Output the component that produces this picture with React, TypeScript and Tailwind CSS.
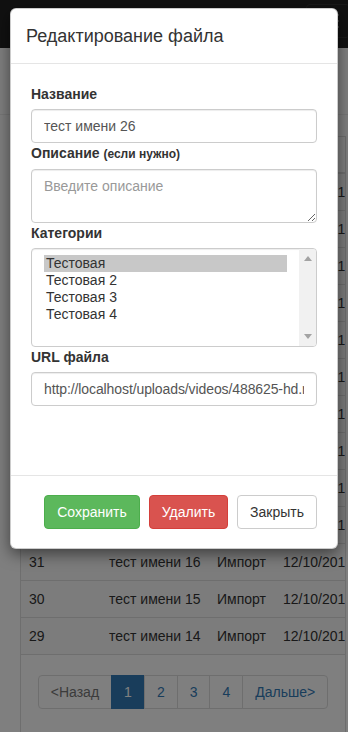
import React from 'react';

const rows = Array.from({ length: 13 }, (_, i) => ({
  id: 41 - i,
  name: `тест имени ${26 - i}`,
  category: 'Импорт',
  date: '12/10/2017',
}));

const options = ['Тестовая', 'Тестовая 2', 'Тестовая 3', 'Тестовая 4'];

const pages = ['1', '2', '3', '4'];

// Page behind the modal
const BackgroundPage = () => (
  <div className="w-[348px]">
    <div className="flex h-[48px] justify-end bg-[#222]">
      <div className="mr-[-2px] mt-[4px] flex h-[34px] w-[44px] flex-col justify-center gap-[4px] rounded-[4px] border border-[#333] px-[10px]">
        <span className="block h-[2px] w-[22px] rounded-[1px] bg-[#888]" />
        <span className="block h-[2px] w-[22px] rounded-[1px] bg-[#888]" />
        <span className="block h-[2px] w-[22px] rounded-[1px] bg-[#888]" />
      </div>
    </div>
    <div className="h-[67px] border-b border-[#eee]" />
    <div className="mt-[21px] ml-[20px] h-[700px] w-[326px] overflow-hidden border-x border-t border-[#ddd]">
      <div className="grid h-[37px] grid-cols-[80px_108px_66px_1fr] items-center border-b-2 border-[#ddd] font-bold">
        <div className="px-2">ID</div>
        <div className="px-2">Название</div>
        <div className="px-2">Тип</div>
        <div className="px-2">Дата</div>
      </div>
      {rows.map((r) => (
        <div
          key={r.id}
          className="grid h-[37px] grid-cols-[80px_108px_66px_1fr] items-center whitespace-nowrap border-b border-[#ddd] bg-[#f9f9f9]"
        >
          <div className="px-2">{r.id}</div>
          <div className="px-2">{r.name}</div>
          <div className="px-2">{r.category}</div>
          <div className="px-2">{r.date}</div>
        </div>
      ))}
      <div className="flex justify-center pt-5">
        <div className="flex h-[34px]">
          <span className="flex items-center rounded-l-[4px] border border-[#ddd] bg-white px-3 text-[#777]">&lt;Назад</span>
          {pages.map((p) => (
            <span
              key={p}
              className={
                p === '1'
                  ? '-ml-px flex items-center border border-[#337ab7] bg-[#337ab7] px-3 text-white'
                  : '-ml-px flex items-center border border-[#ddd] bg-white px-3 text-[#337ab7]'
              }
            >
              {p}
            </span>
          ))}
          <span className="-ml-px flex items-center rounded-r-[4px] border border-[#ddd] bg-white px-3 text-[#337ab7]">Дальше&gt;</span>
        </div>
      </div>
    </div>
  </div>
);

const inputClass =
  "block h-[34px] w-full rounded-[4px] border border-[#ccc] bg-white px-3 font-['Liberation_Sans',Arial,sans-serif] text-[14px] text-[#555] shadow-[inset_0_1px_1px_rgba(0,0,0,0.075)] outline-none";

const EditFileModal = () => (
  <div className="absolute left-[10px] top-[8px] w-[328px] rounded-[6px] border border-black/20 bg-white shadow-[0_5px_15px_rgba(0,0,0,0.5)]">
    <div className="flex h-[55px] items-center border-b border-[#e5e5e5] px-[15px]">
      <h4 className="text-[18px] leading-[26px] text-[#333]">Редактирование файла</h4>
    </div>

    <div className="h-[411px] px-5 pt-5">
      <label className="mb-[5px] block font-bold leading-[20px]">Название</label>
      <input className={inputClass} readOnly defaultValue="тест имени 26" />

      <label className="mb-[5px] block font-bold leading-[20px]">
        Описание <small className="text-[12px]">(если нужно)</small>
      </label>
      <textarea
        className="block h-[54px] w-full rounded-[4px] border border-[#ccc] bg-white px-3 py-[6px] font-['Liberation_Sans',Arial,sans-serif] text-[14px] leading-[20px] text-[#555] shadow-[inset_0_1px_1px_rgba(0,0,0,0.075)] outline-none placeholder:text-[#999]"
        readOnly
        placeholder="Введите описание"
      />

      <label className="mb-[5px] block font-bold leading-[20px]">Категории</label>
      <div className="flex h-[99px] overflow-hidden rounded-[4px] border border-[#ccc] shadow-[inset_0_1px_1px_rgba(0,0,0,0.075)]">
        <div className="flex-1 px-3 pt-[6px] text-[14px] text-[#333]">
          {options.map((o, i) => (
            <div key={o} className={`h-[17px] px-[2px] leading-[17px] ${i === 0 ? 'bg-[#c8c8c8]' : ''}`}>
              {o}
            </div>
          ))}
        </div>
        <div className="flex w-[17px] flex-col items-center justify-between bg-[#f1f1f1] py-[7px]">
          <svg width="8" height="5" viewBox="0 0 8 5">
            <path d="M0 5 L4 0 L8 5 Z" fill="#a3a3a3" />
          </svg>
          <svg width="8" height="5" viewBox="0 0 8 5">
            <path d="M0 0 L8 0 L4 5 Z" fill="#a3a3a3" />
          </svg>
        </div>
      </div>

      <label className="mb-[5px] block font-bold leading-[20px]">URL файла</label>
      <input
        className={`${inputClass} tracking-[-0.1px]`}
        readOnly
        defaultValue="http://localhost/uploads/videos/488625-hd.mp4"
      />
    </div>

    <div className="flex justify-end gap-[9px] border-t border-[#e5e5e5] px-5 py-[19px]">
      <button className="h-[34px] w-[96px] rounded-[4px] border border-[#4cae4c] bg-[#5cb85c] text-[14px] text-white">
        Сохранить
      </button>
      <button className="h-[34px] w-[79px] rounded-[4px] border border-[#d43f3a] bg-[#d9534f] text-[14px] text-white">
        Удалить
      </button>
      <button className="h-[34px] w-[80px] rounded-[4px] border border-[#ccc] bg-white text-[14px] text-[#333]">
        Закрыть
      </button>
    </div>
  </div>
);

export default function App() {
  return (
    <div className="relative h-[732px] w-[348px] overflow-hidden bg-white font-['Liberation_Sans',Arial,sans-serif] text-[14px] leading-[20px] text-[#333]">
      <BackgroundPage />
      <div className="absolute inset-0 bg-black/50" />
      <EditFileModal />
    </div>
  );
}
